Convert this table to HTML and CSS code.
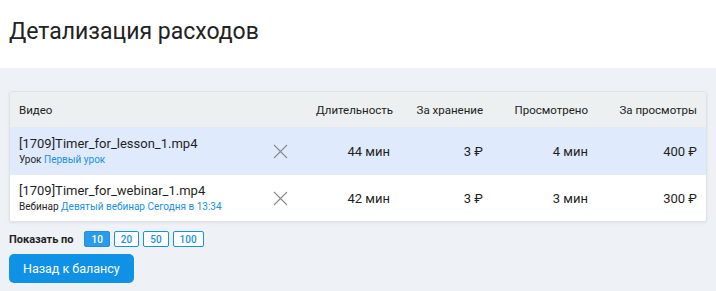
FILE: index.html
```html
<!DOCTYPE html>
<html lang="ru">
  <head>
    <meta charset="UTF-8" />
    <title>Детализация расходов</title>
    <link rel="stylesheet" href="styles.css">
  </head>
  <body>
    <div class="page-head">
      <h1>Детализация расходов</h1>
    </div>
    <div class="content">
      <div class="card">
        <table class="costs">
          <colgroup>
            <col />
            <col class="col-remove" />
            <col class="col-duration" />
            <col class="col-storage" />
            <col class="col-viewed" />
            <col class="col-views" />
          </colgroup>
          <thead>
            <tr>
              <th class="video">Видео</th>
              <th class="remove"></th>
              <th class="num">Длительность</th>
              <th class="num">За хранение</th>
              <th class="num">Просмотрено</th>
              <th class="num">За просмотры</th>
            </tr>
          </thead>
          <tbody>
            <tr class="selected">
              <td class="video">
                <div class="file">[1709]Timer_for_lesson_1.mp4</div>
                <div class="meta">Урок <a href="#">Первый урок</a></div>
              </td>
              <td class="remove">
                <svg width="15" height="15" viewBox="0 0 15 15"><path d="M1 1L14 14M14 1L1 14" stroke="#8a8a8a" stroke-width="1.1" /></svg>
              </td>
              <td class="num">44 мин</td>
              <td class="num">3 ₽</td>
              <td class="num">4 мин</td>
              <td class="num">400 ₽</td>
            </tr>
            <tr>
              <td class="video">
                <div class="file">[1709]Timer_for_webinar_1.mp4</div>
                <div class="meta">Вебинар <a href="#">Девятый вебинар Сегодня в 13:34</a></div>
              </td>
              <td class="remove">
                <svg width="15" height="15" viewBox="0 0 15 15"><path d="M1 1L14 14M14 1L1 14" stroke="#8a8a8a" stroke-width="1.1" /></svg>
              </td>
              <td class="num">42 мин</td>
              <td class="num">3 ₽</td>
              <td class="num">3 мин</td>
              <td class="num">300 ₽</td>
            </tr>
          </tbody>
        </table>
      </div>
      <div class="pager">
        <span class="pager-label">Показать по</span>
        <button class="page-size active">10</button>
        <button class="page-size">20</button>
        <button class="page-size">50</button>
        <button class="page-size">100</button>
      </div>
      <button class="back-button">Назад к балансу</button>
    </div>
  </body>
</html>
```

FILE: styles.css
```css
body {
  margin: 0;
  font-family: Roboto, "Noto Sans", Arial, sans-serif;
  color: #1f1f1f;
  background-color: #eef2f6;
  height: 291px;
  overflow: hidden;
}

.page-head {
  background-color: white;
  height: 68px;
  padding: 0 9px 5px 9px;
  box-sizing: border-box;
  display: flex;
  align-items: center;
}

h1 {
  margin: 0;
  font-size: 23px;
  font-weight: 400;
  color: #222;
}

.content {
  padding: 23px 9px 0 9px;
}

.card {
  background-color: white;
  border: 1px solid #dde3e8;
  border-radius: 3px;
  box-shadow: 0 1px 3px rgba(0, 0, 0, 0.08);
  overflow: hidden;
}

.costs {
  width: 100%;
  table-layout: fixed;
  border-collapse: collapse;
  font-size: 13px;
}

.col-remove { width: 53px; }
.col-duration { width: 92px; }
.col-storage { width: 93px; }
.col-viewed { width: 105px; }
.col-views { width: 109px; }

.costs th {
  background-color: #ecf0f0;
  height: 35px;
  font-weight: 400;
  font-size: 11.5px;
  color: #222;
  padding: 0 9px;
  text-align: left;
}

.costs td {
  height: 46px;
  padding: 0 9px;
  border-top: 1px solid #e6eaee;
}

.costs tr.selected td {
  background-color: #dfeafc;
}

.costs .num {
  text-align: right;
  white-space: nowrap;
}

.costs .remove {
  padding: 0;
}

.costs .remove svg {
  display: block;
  margin: 0 auto;
}

.file {
  font-size: 13px;
  line-height: 16px;
  white-space: nowrap;
}

.meta {
  font-size: 10px;
  line-height: 13px;
  margin-top: 1px;
  white-space: nowrap;
}

.meta a {
  color: #1a90e5;
  text-decoration: none;
}

.pager {
  display: flex;
  align-items: center;
  gap: 4px;
  margin-top: 9px;
}

.pager-label {
  font-size: 11px;
  font-weight: 700;
  margin-right: 7px;
}

.page-size {
  height: 16px;
  min-width: 25px;
  padding: 0 6px;
  font-family: inherit;
  font-size: 10px;
  font-weight: 500;
  color: #1a90e5;
  background-color: white;
  border: 1px solid #1a90e5;
  border-radius: 2px;
  cursor: pointer;
}

.page-size.active {
  background-color: #2a9be8;
  color: white;
}

.back-button {
  margin-top: 7px;
  height: 29px;
  padding: 0 14px;
  font-family: inherit;
  font-size: 12.5px;
  color: white;
  background-color: #0f91e6;
  border: none;
  border-radius: 5px;
  cursor: pointer;
}

.back-button:hover {
  background-color: #0b7ecb;
}
```
